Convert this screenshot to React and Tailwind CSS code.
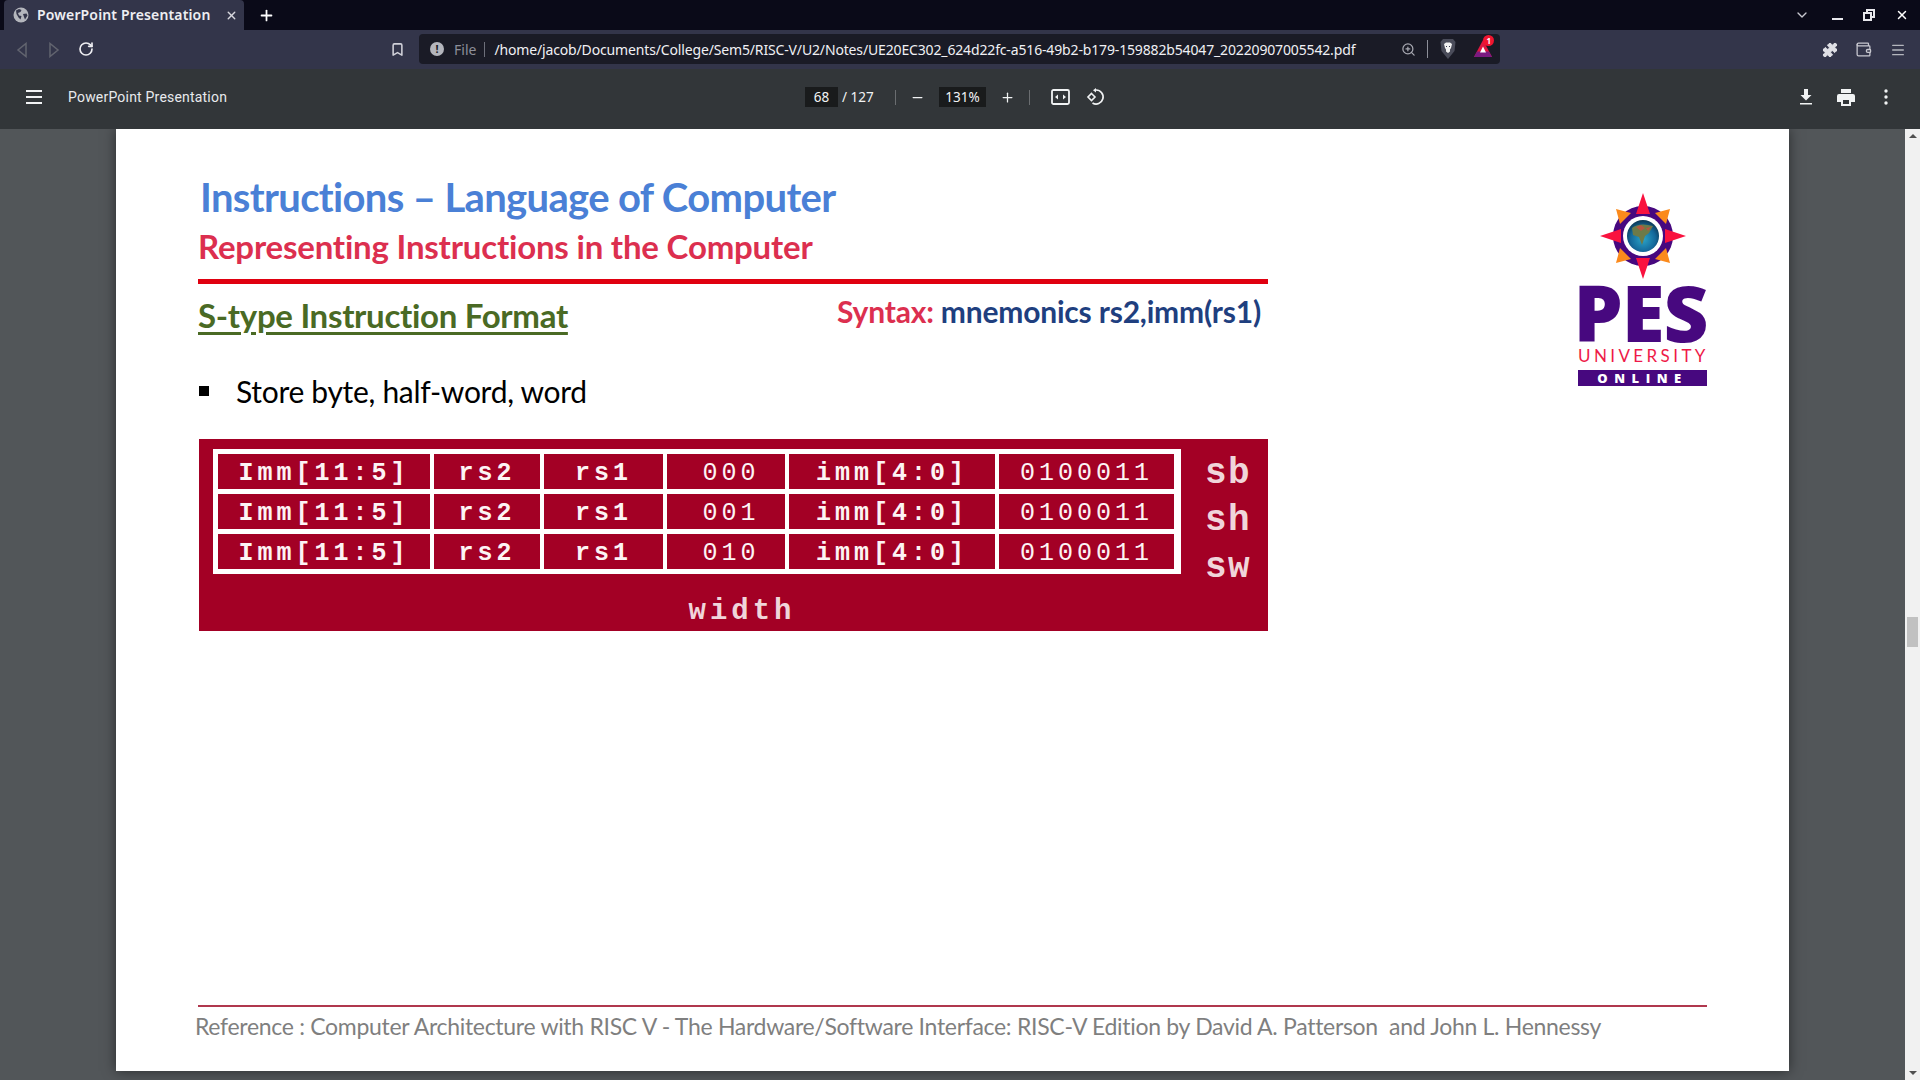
import { Menu, Minus, Plus, RotateCw, X, ChevronDown, Bookmark, ZoomIn, Puzzle, Wallet } from "lucide-react";

const slideFont = "font-['Lato','Open_Sans',sans-serif]";
const rows = [
  ["Imm[11:5]", "rs2", "rs1", "000", "imm[4:0]", "0100011"],
  ["Imm[11:5]", "rs2", "rs1", "001", "imm[4:0]", "0100011"],
  ["Imm[11:5]", "rs2", "rs1", "010", "imm[4:0]", "0100011"],
];

function Globe() {
  return (
    <svg width="16" height="16" viewBox="0 0 16 16">
      <circle cx="8" cy="8" r="7.5" fill="#b4b6bd" />
      <path d="M3 3.5l3-1.5 2.5 1-1 2-2.500 1 1 2.500 2.500.5-1 3.500-2-2-2-3.500zM10 7l3.500-.5 1 2-2.500 4-1-2.500z" fill="#33354a" />
    </svg>
  );
}

function LionShield() {
  return (
    <svg width="16" height="22" viewBox="0 0 16 22">
      <path d="M3 1h10l2.500 3-1 9-6.500 8-6.500-8-1-9z" fill="#4a4c5a" />
      <path d="M4 6l2-1.500h4L12 6l-1 4-1 1.500v2L8 15l-2-1.500v-2L5 10z" fill="#f2f2f2" />
      <path d="M6 8h1v1H6zM9 8h1v1H9z" fill="#33354a" />
    </svg>
  );
}

function RewardsIcon() {
  return (
    <div className="relative w-[18px] h-[18px]">
      <svg width="18" height="18" viewBox="0 0 18 18">
        <path d="M9 0l9 17H0z" fill="#e0173f" />
        <path d="M0 17l3-5.500h12l3 5.500z" fill="#7a1a80" />
        <path d="M9 6.500l3 6H6z" fill="#fff" />
      </svg>
      <span className="absolute -top-[5px] left-[9px] w-[11px] h-[11px] rounded-full bg-[#f01530] text-white text-[8px] leading-[11px] text-center font-bold font-['Noto_Sans',sans-serif]">
        1
      </span>
    </div>
  );
}

function LogoStar() {
  return (
    <svg width="86" height="86" viewBox="-43 -43 86 86">
      <defs>
        <radialGradient id="globeFill" cx="50%" cy="60%" r="60%">
          <stop offset="0%" stopColor="#2aa5c9" />
          <stop offset="65%" stopColor="#14689a" />
          <stop offset="100%" stopColor="#0b3550" />
        </radialGradient>
      </defs>
      <circle r="30" fill="#47087f" />
      <g fill="#f9123f">
        <path d="M0-43L7-22H-7z" />
        <path d="M0 43L7 22H-7z" />
        <path d="M-43 0L-22-7V7z" />
        <path d="M43 0L22-7V7z" />
      </g>
      <g fill="#fb8a1c">
        <path d="M-27-27L-12-23-23-12z" />
        <path d="M27-27L12-23 23-12z" />
        <path d="M-27 27L-12 23-23 12z" />
        <path d="M27 27L12 23 23 12z" />
      </g>
      <circle r="20" fill="#fff" />
      <circle r="16" fill="url(#globeFill)" />
      <path d="M-11-8Q-4-14 10-10L6-3 2 0-1 9-4 1-10-1z" fill="#6d7a48" />
      <path d="M-7-9L-2-11 2-8-2-5zM3-8L8-9 5-5z" fill="#b5563f" />
    </svg>
  );
}

function Logo() {
  return (
    <div className="w-[129px] flex flex-col items-center">
      <LogoStar />
      <div className="w-[129px] h-[59px] mt-[4px] -ml-[9px] text-center text-[#47087f] text-[78px] leading-[58px] font-extrabold font-['Open_Sans',sans-serif] tracking-[-1px]">
        PES
      </div>
      <div className="w-[129px] h-[18px] mt-[5px] text-center text-[#ee1a48] text-[17px] leading-[18px] tracking-[3.400px] font-['Lato',sans-serif]">
        UNIVERSITY
      </div>
      <div className="w-[129px] h-[16px] mt-[5px] bg-[#47087f] text-center text-white text-[13px] leading-[16px] font-extrabold tracking-[6.500px] font-['Open_Sans',sans-serif]">
        ONLINE
      </div>
    </div>
  );
}

function TabStrip() {
  return (
    <div className="h-[30px] bg-[#0a0a18] flex items-center text-white">
      <div className="ml-[4px] w-[240px] h-[30px] bg-[#33354a] rounded-t-[4px] flex items-center pl-[9px]">
        <Globe />
        <span className="ml-[8px] w-[176px] pb-[2px] text-[14px] font-semibold tracking-[0.150px] whitespace-nowrap font-['Noto_Sans',sans-serif] text-[#eeeef2]">
          PowerPoint Presentation
        </span>
        <X size={13} strokeWidth={2.5} className="ml-[12px] text-[#d8d8de]" />
      </div>
      <Plus size={17} strokeWidth={2.5} className="ml-[14px]" />
      <ChevronDown size={16} strokeWidth={2} className="ml-[1519px] text-[#c8c8d0]" />
      <div className="ml-[22px] w-[11px] h-[2px] mt-[8px] bg-[#e8e8ec]" />
      <svg width="12" height="12" viewBox="0 0 12 12" className="ml-[20px]">
        <path d="M3 0h9v9H9v3H0V3h3zM5 2v1h4v4h1V2zM2 5v5h5V5z" fill="#e8e8ec" fillRule="evenodd" />
      </svg>
      <X size={14} strokeWidth={2.5} className="ml-[20px]" />
    </div>
  );
}

function AddressBar() {
  return (
    <div className="h-[39px] bg-[#33354a] flex items-center">
      <svg width="12" height="16" viewBox="0 0 12 16" className="ml-[16px]">
        <path d="M10 1.500v13L2 8z" fill="none" stroke="#62646f" strokeWidth="1.500" />
      </svg>
      <svg width="12" height="16" viewBox="0 0 12 16" className="ml-[20px]">
        <path d="M2 1.500v13L10 8z" fill="none" stroke="#62646f" strokeWidth="1.500" />
      </svg>
      <RotateCw size={16} strokeWidth={2.5} className="ml-[18px] -mt-[1px] text-[#eeeef2]" />
      <Bookmark size={15} strokeWidth={2.5} className="ml-[296px] -mt-[1px] text-[#d0d0d8]" />
      <div className="ml-[14px] w-[1081px] h-[30px] -mt-[1px] bg-[#1a1b26] rounded-[4px] flex items-center pl-[11px]">
        <div className="w-[14px] h-[14px] rounded-full bg-[#b4b6bd] text-[#1a1b26] text-[11px] leading-[14px] font-bold text-center font-['Noto_Sans',sans-serif]">
          !
        </div>
        <span className="ml-[10px] text-[14px] text-[#8d8f99] font-['Noto_Sans',sans-serif]">File</span>
        <div className="ml-[8px] w-px h-[15px] bg-[#6d6f7a]" />
        <span className="ml-[9px] w-[860px] text-[14px] tracking-[-0.150px] text-[#f0f0f4] whitespace-nowrap font-['Noto_Sans',sans-serif]">
          /home/jacob/Documents/College/Sem5/RISC-V/U2/Notes/UE20EC302_624d22fc-a516-49b2-b179-159882b54047_20220907005542.pdf
        </span>
        <ZoomIn size={15} className="ml-[47px] text-[#a8a9b2]" />
        <div className="ml-[11px] w-px h-[18px] bg-[#8d8f99]" />
        <div className="ml-[12px]">
          <LionShield />
        </div>
        <div className="ml-[18px]">
          <RewardsIcon />
        </div>
      </div>
      <Puzzle size={16} fill="#e0e0e6" strokeWidth={1.500} className="ml-[322px] text-[#e0e0e6]" />
      <Wallet size={17} strokeWidth={1.800} className="ml-[17px] text-[#c8c8d0]" />
      <Menu size={16} strokeWidth={2} className="ml-[18px] text-[#b4b6bd]" />
    </div>
  );
}

function PdfToolbar() {
  return (
    <div className="relative h-[60px] pb-[4px] bg-[#323639] flex items-center text-[#f1f3f4]">
      <svg width="18" height="14" viewBox="0 0 18 14" className="ml-[25px]">
        <path d="M1 0h16v2H1zM1 6h16v2H1zM1 12h16v2H1z" fill="#f1f3f4" />
      </svg>
      <span className="ml-[25px] w-[160px] text-[14px] tracking-[0.200px] text-[#e8eaed] whitespace-nowrap font-['Roboto',sans-serif]">
        PowerPoint Presentation
      </span>
      <div className="ml-[577px] w-[33px] h-[20px] bg-[#191b1c] text-center text-[13.500px] leading-[20px] font-['Noto_Sans',sans-serif]">
        68
      </div>
      <span className="ml-[4px] w-[34px] text-[13.500px] whitespace-nowrap font-['Noto_Sans',sans-serif]">/ 127</span>
      <div className="ml-[19px] w-px h-[15px] bg-[#6a6d70]" />
      <Minus size={15} strokeWidth={2} className="ml-[14px]" />
      <div className="ml-[14px] w-[47px] h-[20px] bg-[#191b1c] text-center text-[13.500px] leading-[20px] font-['Noto_Sans',sans-serif]">
        131%
      </div>
      <Plus size={15} strokeWidth={2} className="ml-[14px]" />
      <div className="ml-[14px] w-px h-[15px] bg-[#6a6d70]" />
      <svg width="19" height="16" viewBox="0 0 19 16" className="ml-[21px]">
        <rect x="1" y="1" width="17" height="14" rx="1.500" fill="none" stroke="#f1f3f4" strokeWidth="1.800" />
        <path d="M7 5.500v5L4 8zM12 5.500v5L15 8z" fill="#f1f3f4" />
      </svg>
      <svg width="19" height="18" viewBox="0 0 19 18" className="ml-[16px]">
        <path d="M10 2a7 7 0 1 1-3.500 13" fill="none" stroke="#f1f3f4" strokeWidth="1.700" />
        <path d="M10 0v4.500L7 2.200z" fill="#f1f3f4" />
        <path d="M5.500 5.500L9 9l-3.500 3.500L2 9z" fill="none" stroke="#f1f3f4" strokeWidth="1.600" />
      </svg>
      <svg width="14" height="16" viewBox="0 0 14 16" className="ml-[694px]">
        <path d="M5 0h4v6h3.500L7 11.500 1.500 6H5zM1 14h12v1.600H1z" fill="#f1f3f4" />
      </svg>
      <svg width="18" height="17" viewBox="0 0 18 17" className="ml-[24px]">
        <path d="M4 0h10v4H4zM2 5h14a2 2 0 0 1 2 2v6h-4v4H4v-4H0V7a2 2 0 0 1 2-2zm4 6v4h6v-4z" fill="#f1f3f4" fillRule="evenodd" />
      </svg>
      <svg width="4" height="16" viewBox="0 0 4 16" className="ml-[29px]">
        <circle cx="2" cy="2" r="1.700" fill="#f1f3f4" />
        <circle cx="2" cy="8" r="1.700" fill="#f1f3f4" />
        <circle cx="2" cy="14" r="1.700" fill="#f1f3f4" />
      </svg>
    </div>
  );
}

function FormatTable() {
  return (
    <div className="mt-[28px] ml-[1px] w-[1069px] h-[192px] bg-[#a30025] pt-[10px] pl-[14px] font-['Liberation_Mono',monospace]">
      <div className="flex h-[125px]">
        <div className="w-[968px] h-[125px] bg-white p-[5px] flex flex-col gap-[5px]">
          {rows.map((row, i) => (
            <div key={i} className="grid grid-cols-[212px_106px_119px_118px_206px_175px] gap-x-[4px] h-[35px]">
              {row.map((cell, j) => (
                <div
                  key={j}
                  className={`bg-[#a30025] text-[#fdf3f4] text-center text-[25px] leading-[39px] tracking-[4px] whitespace-nowrap overflow-hidden ${
                    j === 3 ? "pl-[10px] font-normal" : j === 5 ? "font-normal" : "font-bold"
                  }`}
                >
                  {cell}
                </div>
              ))}
            </div>
          ))}
        </div>
        <div className="ml-[24px] flex flex-col pt-[1px] text-[#f0d5da] text-[36px] leading-[47px] tracking-[1.500px] font-bold">
          <span>sb</span>
          <span>sh</span>
          <span>sw</span>
        </div>
      </div>
      <div className="mt-[21px] w-[1058px] text-center text-[#f0d5da] text-[29px] leading-[34px] font-bold tracking-[4px]">
        width
      </div>
    </div>
  );
}

function SlidePage() {
  return (
    <div className={`ml-[116px] w-[1673px] h-[942px] bg-white shadow-[0_0_12px_rgba(0,0,0,0.5)] flex flex-col pl-[82px] pt-[43px] ${slideFont}`}>
      <div className="flex">
        <div className="w-[1070px]">
          <h1 className="pl-[2px] h-[50px] text-[#4a80d6] text-[40px] leading-[50px] font-bold tracking-[-0.650px] whitespace-nowrap">
            Instructions – Language of Computer
          </h1>
          <h2 className="h-[50px] text-[#dc2f4f] text-[33px] leading-[48px] font-bold tracking-[-0.200px] whitespace-nowrap">
            Representing Instructions in the Computer
          </h2>
          <div className="mt-[7px] h-[5px] bg-[#e00010]" />
          <div className="flex h-[64px] items-center justify-between">
            <span className="text-[#4a6a24] text-[33px] font-bold tracking-[-0.300px] underline decoration-[3px] underline-offset-[4px] whitespace-nowrap">
              S-type Instruction Format
            </span>
            <span className="pr-[7px] -mt-[10px] text-[30px] font-bold tracking-[-0.200px] whitespace-nowrap">
              <span className="text-[#dc2f4f]">Syntax: </span>
              <span className="text-[#1f3f7f]">mnemonics rs2,imm(rs1)</span>
            </span>
          </div>
          <div className="mt-[23px] pl-[1px] flex items-center h-[40px]">
            <div className="w-[10px] h-[10px] bg-black" />
            <span className="ml-[27px] text-[30px] leading-[40px] text-black tracking-[-0.300px] whitespace-nowrap">
              Store byte, half-word, word
            </span>
          </div>
          <FormatTable />
        </div>
        <div className="ml-[310px] mt-[21px]">
          <Logo />
        </div>
      </div>
      <div className="mt-auto mb-[27px]">
        <div className="w-[1509px] h-[2px] bg-[#b0384e]" />
        <div className="-ml-[3px] mt-[1px] text-[#7f7f7f] text-[23px] leading-[36px] tracking-[-0.300px] whitespace-pre">
          Reference : Computer Architecture with RISC V - The Hardware/Software Interface: RISC-V Edition by David A. Patterson  and John L. Hennessy
        </div>
      </div>
    </div>
  );
}

function Scrollbar() {
  return (
    <div className="w-[15px] bg-[#f1f1f1] flex flex-col items-center">
      <div className="mt-[5px] w-0 h-0 border-x-[4px] border-x-transparent border-b-[4px] border-b-[#505050]" />
      <div className="mt-[479px] w-[11px] h-[30px] bg-[#c1c1c1]" />
      <div className="mt-auto mb-[5px] w-0 h-0 border-x-[4px] border-x-transparent border-t-[4px] border-t-[#505050]" />
    </div>
  );
}

export default function App() {
  return (
    <div className="w-[1920px] h-screen overflow-hidden flex flex-col bg-[#525659]">
      <TabStrip />
      <AddressBar />
      <PdfToolbar />
      <main className="flex-1 flex justify-between min-h-0">
        <SlidePage />
        <Scrollbar />
      </main>
    </div>
  );
}
